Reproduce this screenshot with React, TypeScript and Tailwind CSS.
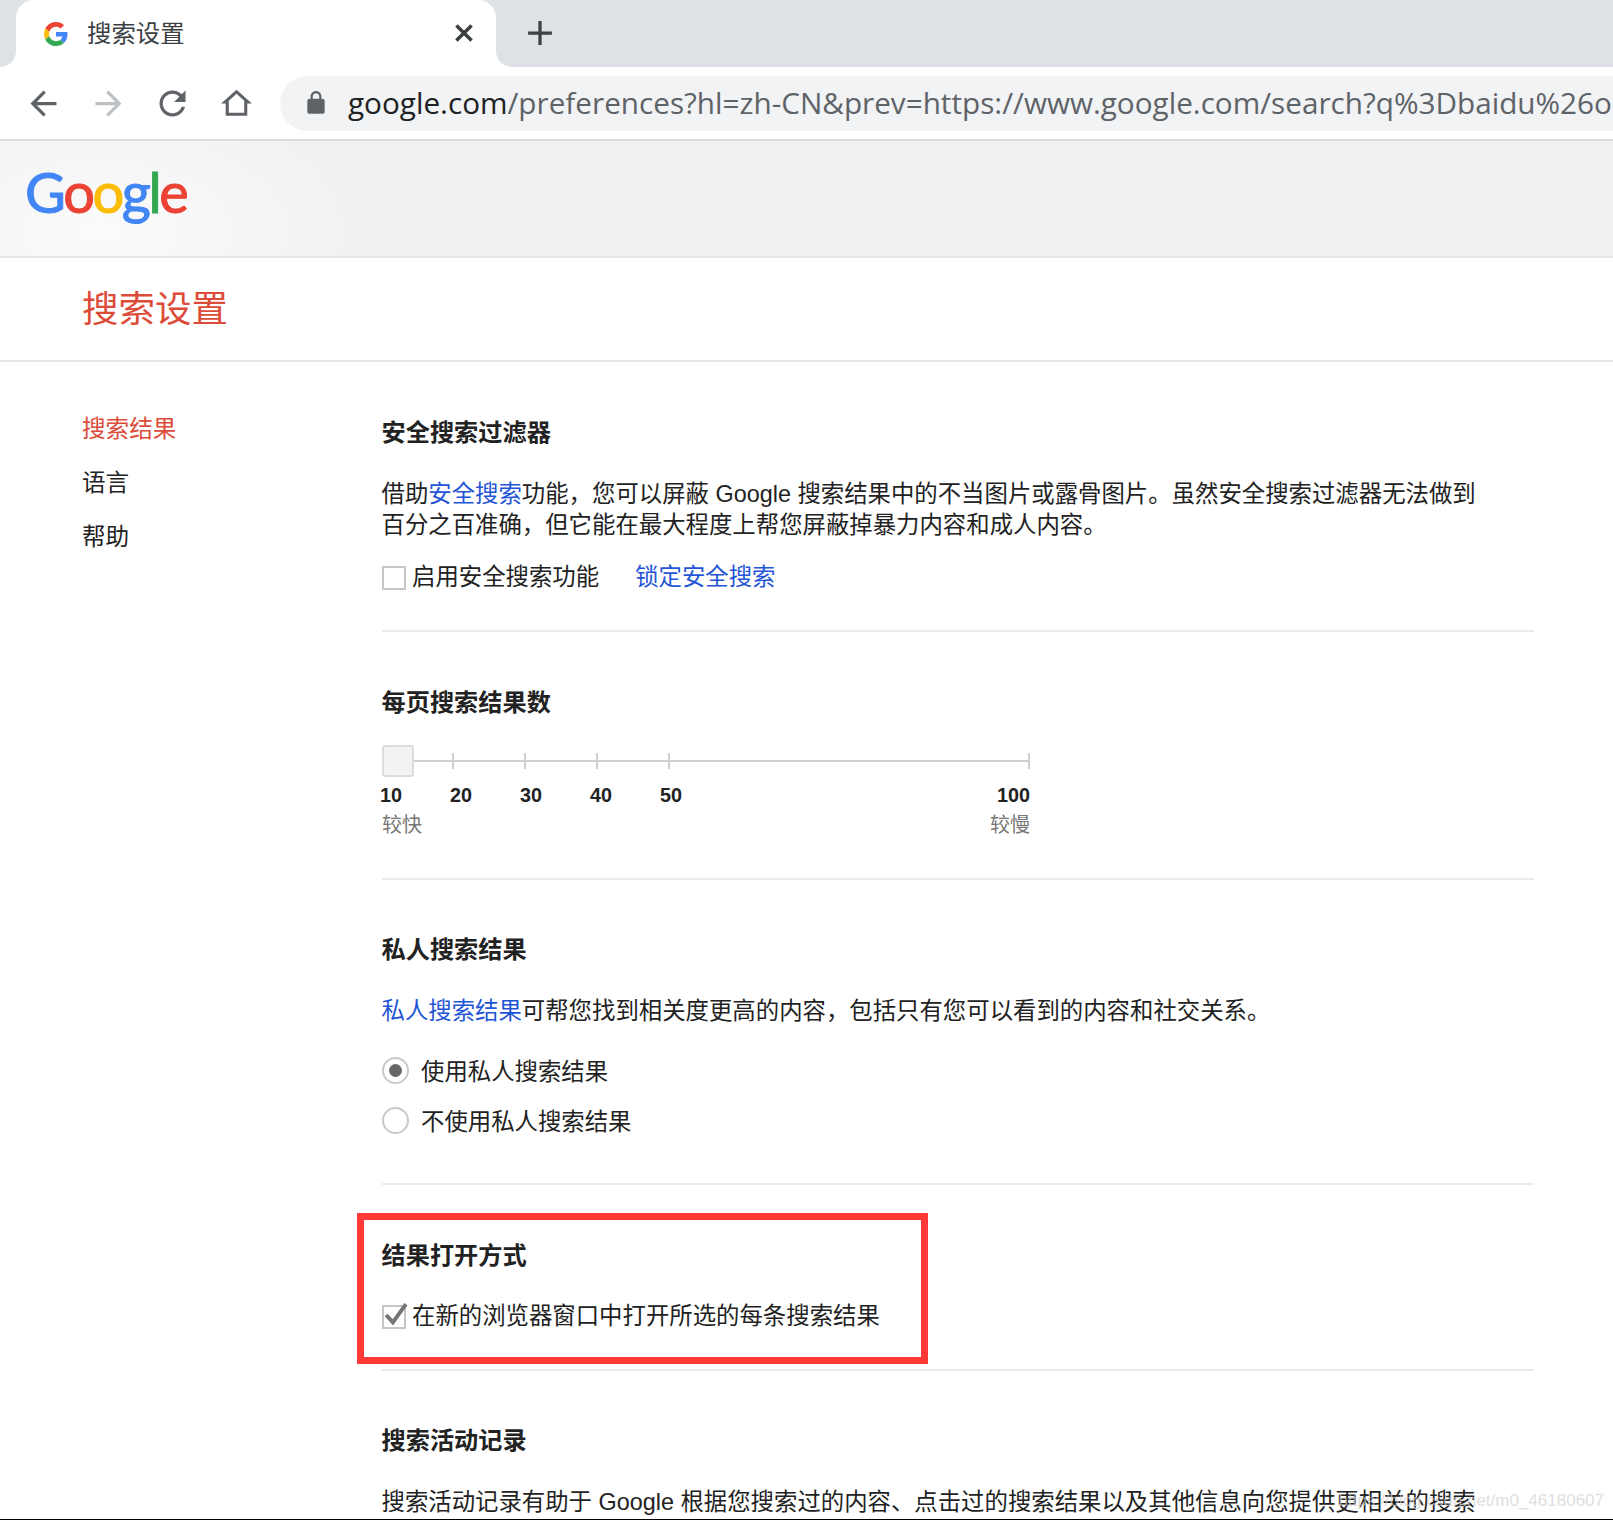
import React from "react";

const cjk = "font-['Liberation_Sans','Noto_Sans_CJK_SC',sans-serif]";

function Icon({ d, className, fill }: { d: string; className?: string; fill: string }) {
  return (
    <svg viewBox="0 0 24 24" className={className} fill={fill}>
      <path d={d} />
    </svg>
  );
}

function Heading({ children }: { children: React.ReactNode }) {
  return <h2 className="ml-[-0.5px] h-[36px] text-[24.2px] leading-[36px] font-bold text-[#222]">{children}</h2>;
}

function Link({ children }: { children: React.ReactNode }) {
  return <a className="text-[#1f55d6]">{children}</a>;
}

function Check({ checked }: { checked?: boolean }) {
  return (
    <span className="relative block w-[24px] h-[24px] border-2 border-[#c6c6c6] shrink-0 bg-white">
      {checked && (
        <svg viewBox="0 0 26 26" className="absolute left-[-2px] top-[-6px] w-[27px] h-[27px]" fill="none">
          <path d="M4 13.5 L10.5 20.5 L23 3" stroke="#767676" strokeWidth="3.8" />
        </svg>
      )}
    </span>
  );
}

function Radio({ checked, label }: { checked?: boolean; label: string }) {
  return (
    <div className="flex items-center h-[50px]">
      <span className="flex items-center justify-center w-[27px] h-[27px] rounded-full border-2 border-[#c9c9c9] shrink-0">
        {checked && <span className="block w-[13px] h-[13px] rounded-full bg-[#666]" />}
      </span>
      <span className="ml-[12px] mt-[5px] text-[23.4px] leading-[31px] text-[#222]">{label}</span>
    </div>
  );
}

function Divider() {
  return <div className="h-[2px] bg-[#ebebeb]" />;
}

export default function App() {
  return (
    <div className={`relative w-[1613px] h-[1520px] overflow-hidden bg-white flex flex-col ${cjk}`}>
      {/* Tab strip */}
      <div className="flex h-[67px] bg-white shrink-0">
        <div className="w-[16px] bg-[#dee1e6] rounded-br-[16px]" />
        <div className="w-[480px] bg-[#dee1e6]">
          <div className="h-full bg-white rounded-t-[18px] flex items-center relative">
            <svg viewBox="0 0 48 48" className="ml-[28px] w-[24px] h-[24px] shrink-0">
              <path fill="#EA4335" d="M24 9.5c3.54 0 6.71 1.22 9.21 3.6l6.85-6.85C35.9 2.38 30.47 0 24 0 14.62 0 6.51 5.38 2.56 13.22l7.98 6.19C12.43 13.72 17.74 9.5 24 9.5z" />
              <path fill="#4285F4" d="M46.98 24.55c0-1.57-.15-3.09-.38-4.55H24v9.02h12.94c-.58 2.96-2.26 5.48-4.78 7.18l7.73 6c4.51-4.18 7.09-10.36 7.09-17.65z" />
              <path fill="#FBBC05" d="M10.53 28.59c-.48-1.45-.76-2.99-.76-4.59s.27-3.14.76-4.59l-7.98-6.19C.92 16.46 0 20.12 0 24c0 3.88.92 7.54 2.56 10.78l7.97-6.19z" />
              <path fill="#34A853" d="M24 48c6.48 0 11.93-2.13 15.89-5.81l-7.73-6c-2.15 1.45-4.92 2.3-8.16 2.3-6.26 0-11.57-4.22-13.47-9.91l-7.98 6.19C6.51 42.62 14.62 48 24 48z" />
            </svg>
            <span className="ml-[19px] text-[24.4px] leading-[34px] text-[#3c4043]">搜索设置</span>
            <svg viewBox="0 0 24 24" className="absolute left-[435px] top-[20px] w-[26px] h-[26px]" stroke="#3c4043" strokeWidth="3.2" fill="none">
              <path d="M5 5 L19 19 M19 5 L5 19" />
            </svg>
          </div>
        </div>
        <div className="flex-1 bg-[#dee1e6] rounded-bl-[16px] flex items-center pb-[1px]">
          <svg viewBox="0 0 24 24" className="ml-[31px] w-[26px] h-[26px]" stroke="#3c4043" strokeWidth="3" fill="none">
            <path d="M12 1 V23 M1 12 H23" />
          </svg>
        </div>
      </div>
      {/* Toolbar */}
      <div className="flex items-center h-[72px] shrink-0 bg-white">
        <div className="flex items-center w-[280px] pl-[24px] gap-[25.6px]">
          <Icon fill="#5f6368" className="w-[39px] h-[39px] shrink-0" d="M20 11H7.83l5.59-5.59L12 4l-8 8 8 8 1.41-1.41L7.83 13H20v-2z" />
          <Icon fill="#bdc1c6" className="w-[39px] h-[39px] shrink-0" d="M12 4l-1.41 1.41L16.17 11H4v2h12.17l-5.58 5.59L12 20l8-8z" />
          <Icon fill="#5f6368" className="w-[39px] h-[39px] shrink-0" d="M17.65 6.35C16.2 4.9 14.21 4 12 4c-4.42 0-7.99 3.58-7.99 8s3.57 8 7.99 8c3.73 0 6.84-2.55 7.73-6h-2.08c-.82 2.33-3.04 4-5.65 4-3.31 0-6-2.69-6-6s2.69-6 6-6c1.66 0 3.14.69 4.22 1.78L13 11h7V4l-2.35 2.35z" />
          <Icon fill="#5f6368" className="w-[37px] h-[37px] shrink-0" d="M12 3L2 12h3v8h14v-8h3L12 3zm5 15H7v-7.81l5-4.5 5 4.5V18z" />
        </div>
        <div className="flex-1 h-[55px] bg-[#f1f3f4] rounded-l-[28px] flex items-center overflow-hidden">
          <Icon fill="#5f6368" className="ml-[23px] w-[26px] h-[26px] shrink-0" d="M18 8h-1V6c0-2.76-2.24-5-5-5S7 3.24 7 6v2H6c-1.1 0-2 .9-2 2v10c0 1.1.9 2 2 2h12c1.1 0 2-.9 2-2V10c0-1.1-.9-2-2-2zM9 6c0-1.66 1.34-3 3-3s3 1.34 3 3v2H9V6z" />
          <span className="ml-[19px] whitespace-nowrap font-['Open_Sans',sans-serif] text-[29.7px] leading-[40px] text-[#5f6368]">
            <span className="text-[#202124]">google.com</span>/preferences?hl=zh-CN&amp;prev=https://www.google.com/search?q%3Dbaidu%26oq%3Dbaidu
          </span>
        </div>
      </div>
      {/* Google header */}
      <div className="h-[119px] shrink-0 border-t-2 border-b-2 border-t-[#dadce0] border-b-[#e5e5e5] bg-[radial-gradient(ellipse_260px_140px_at_100px_90px,#fbfbfb,#f1f1f1)] flex items-center pl-[25px]">
        <div className="font-['Lato',sans-serif] font-normal text-[56px] leading-[60px] tracking-[-2.4px] mt-[-13px] [-webkit-text-stroke:1px]">
          <span className="text-[#4285f4]">G</span>
          <span className="text-[#ea4335]">o</span>
          <span className="text-[#fbbc05]">o</span>
          <span className="text-[#4285f4]">g</span>
          <span className="text-[#34a853]">l</span>
          <span className="text-[#ea4335]">e</span>
        </div>
      </div>
      {/* Title */}
      <div className="h-[104px] shrink-0 border-b-2 border-[#e5e5e5] flex items-center pl-[82px] pt-[2px]">
        <h1 className="text-[36.5px] leading-[50px] font-normal text-[#dd4b39]">搜索设置</h1>
      </div>
      {/* Body */}
      <div className="flex flex-1 min-h-0">
        <nav className="w-[382px] shrink-0 pl-[82px] pt-[40px] text-[23.6px] leading-[54px] text-[#222]">
          <div className="text-[#dd4b39]">搜索结果</div>
          <div>语言</div>
          <div>帮助</div>
        </nav>
        <main className="w-[1152px] shrink-0">
          {/* Safe search */}
          <section className="h-[268px] pt-[53px] flex flex-col">
            <Heading>安全搜索过滤器</Heading>
            <p className="ml-[-0.5px] mt-[28px] text-[23.4px] leading-[31px] text-[#222] whitespace-nowrap">
              借助<Link>安全搜索</Link>功能，您可以屏蔽 Google 搜索结果中的不当图片或露骨图片。虽然安全搜索过滤器无法做到
              <br />
              百分之百准确，但它能在最大程度上帮您屏蔽掉暴力内容和成人内容。
            </p>
            <div className="mt-[21px] flex items-center text-[23.4px] leading-[31px] text-[#222]">
              <Check />
              <span className="ml-[6px]">启用安全搜索功能</span>
              <span className="ml-[36px]"><Link>锁定安全搜索</Link></span>
            </div>
          </section>
          <Divider />
          {/* Slider */}
          <section className="h-[246px] pt-[53px]">
            <Heading>每页搜索结果数</Heading>
            <div className="w-[648px] mt-[24px] flex items-center h-[32px]">
              <span className="block w-[32px] h-[32px] rounded-[3px] border-2 border-[#dcdcdc] bg-[#f3f3f3] shrink-0" />
              <svg viewBox="0 0 616 18" className="w-[616px] h-[18px] shrink-0" stroke="#cfcfcf" fill="none">
                <path d="M0 9 H616" strokeWidth="2" />
                <path d="M39 1 V17 M111 1 V17 M183 1 V17 M255 1 V17 M615 1 V17" strokeWidth="2" />
              </svg>
            </div>
            <div className="flex w-[650px] ml-[-2px] mt-[3px] h-[30px] items-center text-[19.8px] leading-[30px] font-bold text-[#222]">
              <span className="w-[70px]">10</span>
              <span className="w-[70px]">20</span>
              <span className="w-[70px]">30</span>
              <span className="w-[70px]">40</span>
              <span className="w-[70px]">50</span>
              <span className="ml-auto">100</span>
            </div>
            <div className="flex justify-between w-[648px] mt-[1px] h-[28px] text-[20px] leading-[28px] text-[#777]">
              <span>较快</span>
              <span>较慢</span>
            </div>
          </section>
          <Divider />
          {/* Personal results */}
          <section className="h-[303px] pt-[52px]">
            <Heading>私人搜索结果</Heading>
            <p className="ml-[-0.5px] mt-[28px] text-[23.4px] leading-[31px] text-[#222]">
              <Link>私人搜索结果</Link>可帮您找到相关度更高的内容，包括只有您可以看到的内容和社交关系。
            </p>
            <div className="mt-[18px]">
              <Radio checked label="使用私人搜索结果" />
              <Radio label="不使用私人搜索结果" />
            </div>
          </section>
          <Divider />
          {/* Open results */}
          <section className="relative h-[184px] pt-[53px]">
            <Heading>结果打开方式</Heading>
            <div className="mt-[27px] flex items-center text-[23.4px] leading-[31px] text-[#222]">
              <Check checked />
              <span className="ml-[6px]">在新的浏览器窗口中打开所选的每条搜索结果</span>
            </div>
            <div className="absolute left-[-25px] top-[28px] w-[571px] h-[151px] border-[7px] border-[#ff3838]" />
          </section>
          <Divider />
          {/* Activity */}
          <section className="pt-[52px]">
            <Heading>搜索活动记录</Heading>
            <p className="ml-[-0.5px] mt-[28px] text-[23.4px] leading-[31px] text-[#222] whitespace-nowrap">
              搜索活动记录有助于 Google 根据您搜索过的内容、点击过的搜索结果以及其他信息向您提供更相关的搜索
            </p>
          </section>
        </main>
      </div>
      <div className="h-[1px] bg-black shrink-0" />
      <div className="absolute right-[9px] top-[1489px] font-['Liberation_Sans',sans-serif] text-[17px] leading-[24px] text-[#d0d0d0]/70 whitespace-nowrap">
        https://blog.csdn.net/m0_46180607
      </div>
    </div>
  );
}
